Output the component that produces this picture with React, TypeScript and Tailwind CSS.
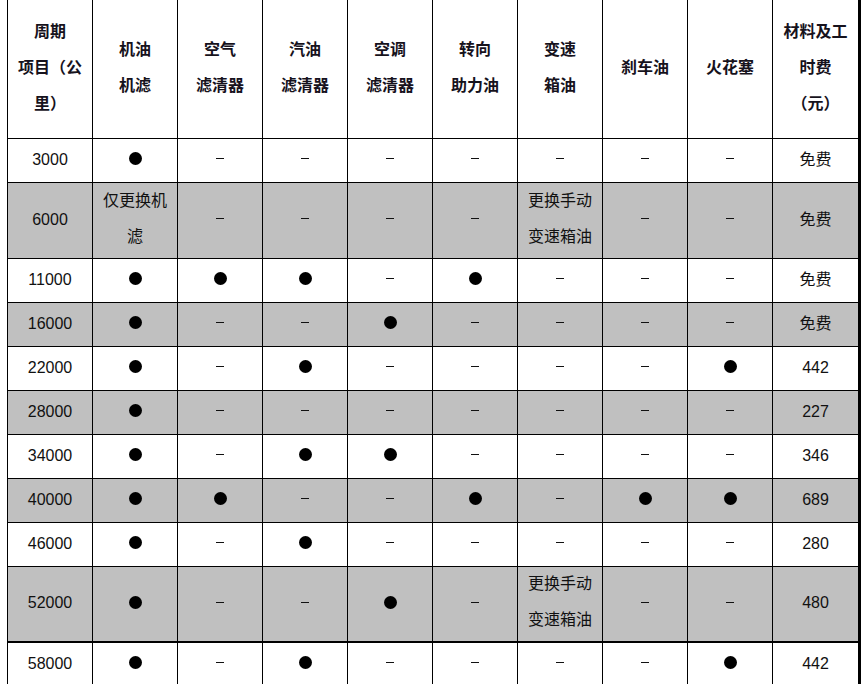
import React from 'react'

type Cell = 'dot' | 'dash' | string

const headers = [
  ['周期', '项目（公', '里）'],
  ['机油', '机滤'],
  ['空气', '滤清器'],
  ['汽油', '滤清器'],
  ['空调', '滤清器'],
  ['转向', '助力油'],
  ['变速', '箱油'],
  ['刹车油'],
  ['火花塞'],
  ['材料及工', '时费', '（元）'],
]

const D = 'dot'
const X = 'dash'

const rows: { km: string; cells: Cell[]; fee: string; gray?: boolean; tall?: boolean; thick?: boolean }[] = [
  { km: '3000', cells: [D, X, X, X, X, X, X, X], fee: '免费' },
  { km: '6000', cells: ['仅更换机|滤', X, X, X, X, '更换手动|变速箱油', X, X], fee: '免费', gray: true, tall: true },
  { km: '11000', cells: [D, D, D, X, D, X, X, X], fee: '免费' },
  { km: '16000', cells: [D, X, X, D, X, X, X, X], fee: '免费', gray: true },
  { km: '22000', cells: [D, X, D, X, X, X, X, D], fee: '442' },
  { km: '28000', cells: [D, X, X, X, X, X, X, X], fee: '227', gray: true },
  { km: '34000', cells: [D, X, D, D, X, X, X, X], fee: '346' },
  { km: '40000', cells: [D, D, X, X, D, X, D, D], fee: '689', gray: true },
  { km: '46000', cells: [D, X, D, X, X, X, X, X], fee: '280' },
  { km: '52000', cells: [D, X, X, D, X, '更换手动|变速箱油', X, X], fee: '480', gray: true, tall: true, thick: true },
  { km: '58000', cells: [D, X, D, X, X, X, X, D], fee: '442' },
]

function CellBox({ children, last }: { children: React.ReactNode; last?: boolean }) {
  return (
    <div
      className={`flex items-center justify-center text-center border-black ${
        last ? 'w-[88px] border-r-[3px]' : 'w-[85px] border-r'
      }`}
    >
      {children}
    </div>
  )
}

function Content({ value }: { value: Cell }) {
  if (value === 'dot') return <div className="w-[13px] h-[13px] rounded-full bg-black -translate-y-0.5" />
  if (value === 'dash') return <div className="w-[8px] h-px bg-[#111] -translate-y-0.5" />
  return (
    <div className="leading-[36px] -translate-y-0.5">
      {value.split('|').map((line, i) => (
        <div key={i}>{line}</div>
      ))}
    </div>
  )
}

export default function App() {
  return (
    <div className="w-[866px] h-[684px] overflow-hidden bg-white text-[16px] text-[#111] font-['Liberation_Sans','Noto_Sans_CJK_SC',sans-serif]">
      <div className="ml-[7px] w-fit border-l border-black">
        <div className="flex h-[139px] border-b border-black font-bold font-['Noto_Sans_CJK_SC',sans-serif] text-[#16121c]">
          {headers.map((h, i) => (
            <CellBox key={i} last={i === headers.length - 1}>
              <div className="leading-[36px] -translate-y-[3px]">
                {h.map((line, j) => (
                  <div key={j}>{line}</div>
                ))}
              </div>
            </CellBox>
          ))}
        </div>
        {rows.map((r) => (
          <div
            key={r.km}
            className={`flex border-black ${r.tall ? 'h-[76px]' : 'h-[44px]'} ${r.thick ? 'border-b-2' : 'border-b'} ${
              r.gray ? 'bg-[#c0c0c0]' : 'bg-white'
            }`}
          >
            <CellBox>
              <span className="-translate-y-px">{r.km}</span>
            </CellBox>
            {r.cells.map((c, i) => (
              <CellBox key={i}>
                <Content value={c} />
              </CellBox>
            ))}
            <CellBox last>
              <span className="-translate-y-px">{r.fee}</span>
            </CellBox>
          </div>
        ))}
      </div>
    </div>
  )
}
